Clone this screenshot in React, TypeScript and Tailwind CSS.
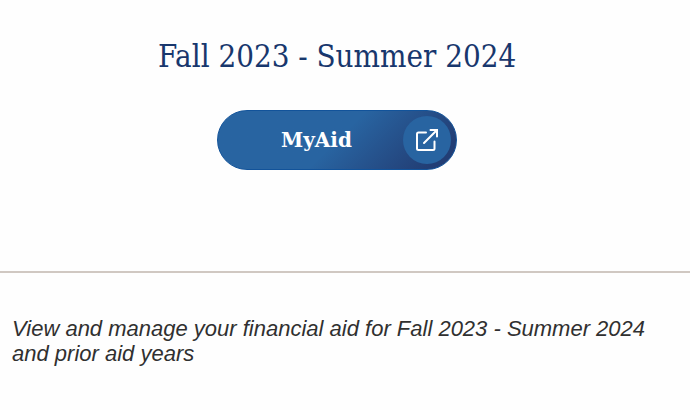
export default function App() {
  return (
    <main className="min-h-screen bg-[#fefefe]">
      <section className="flex flex-col items-center border-b-2 border-[#d0c8c2] pt-9 pr-4 pb-[101px]">
        <h1 className="text-center font-['DejaVu_Serif_Condensed','DejaVu_Serif',serif] text-[31px] leading-10 text-[#18376d]">
          Fall 2023 - Summer 2024
        </h1>
        <a
          href="#myaid"
          className="mt-[34px] flex h-15 w-60 items-center rounded-full border border-[#12539a] bg-linear-135 from-[#2864a1] from-50% to-[#223e75] to-90% pr-[5px] text-white"
        >
          <span className="flex-1 pl-3 text-center font-['DejaVu_Serif',serif] text-xl font-bold">
            MyAid
          </span>
          <span className="flex size-12 items-center justify-center rounded-full bg-[#2864a1]">
            <svg
              className="size-6"
              viewBox="0 0 24 24"
              fill="none"
              stroke="currentColor"
              strokeWidth="2"
              strokeLinecap="round"
              aria-hidden="true"
            >
              <path d="M11 4.500H3.500Q2 4.500 2 6V20.500Q2 22 3.500 22H18Q19.500 22 19.500 20.500V13.500" />
              <path d="M9 15 22 2M15.500 2H22V8.500" />
            </svg>
          </span>
        </a>
      </section>
      <p className="px-3 pt-[43px] pb-10 font-['Liberation_Sans',Arial,sans-serif] text-[22px] leading-[25px] text-[#303030] italic">
        View and manage your financial aid for Fall 2023 - Summer 2024 and prior aid years
      </p>
    </main>
  );
}
